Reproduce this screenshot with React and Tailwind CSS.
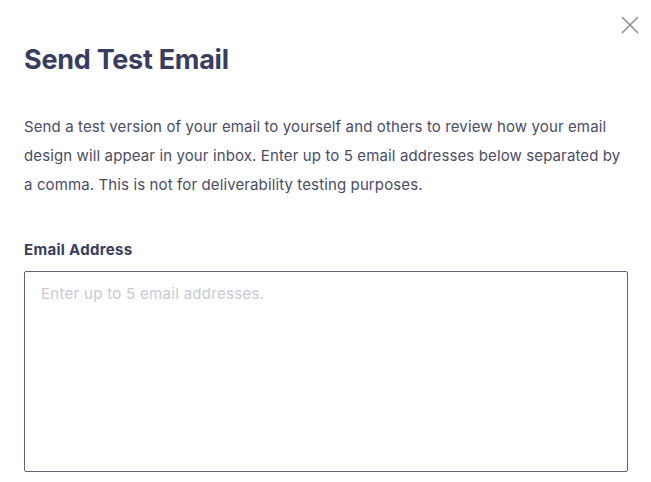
import { X } from 'lucide-react';

export default function App() {
  return (
    <div
      className="relative min-h-screen bg-white px-6 pt-[44px] text-[#3b3f5c]"
      style={{ fontFamily: 'Inter, "Liberation Sans", sans-serif' }}
    >
      <button className="absolute right-[6px] top-[10px] text-[#8c8d93]">
        <X size={30} strokeWidth={1.2} />
      </button>

      <h1 className="text-[27px] font-bold leading-[32px] tracking-[-0.01em] text-[#383d5e]">
        Send Test Email
      </h1>

      <p className="mt-[36px] text-[15px] leading-[29px] tracking-[0.008em] text-[#4a4d65]">
        Send a test version of your email to yourself and others to review how your email
        <br />
        design will appear in your inbox. Enter up to 5 email addresses below separated by
        <br />
        a comma. This is not for deliverability testing purposes.
      </p>

      <label className="mt-[41px] block text-[15px] font-bold leading-[20px] tracking-[0.02em] text-[#383d5e]">
        Email Address
      </label>

      <textarea
        className="mt-[11px] block h-[201px] w-[604px] resize-none rounded-[2px] border-[1.5px] border-[#5c607a] px-4 py-[11px] text-[15px] tracking-[0.02em] text-[#4a4d65] outline-none placeholder:text-[#c8c9d5]"
        placeholder="Enter up to 5 email addresses."
      />
    </div>
  );
}
